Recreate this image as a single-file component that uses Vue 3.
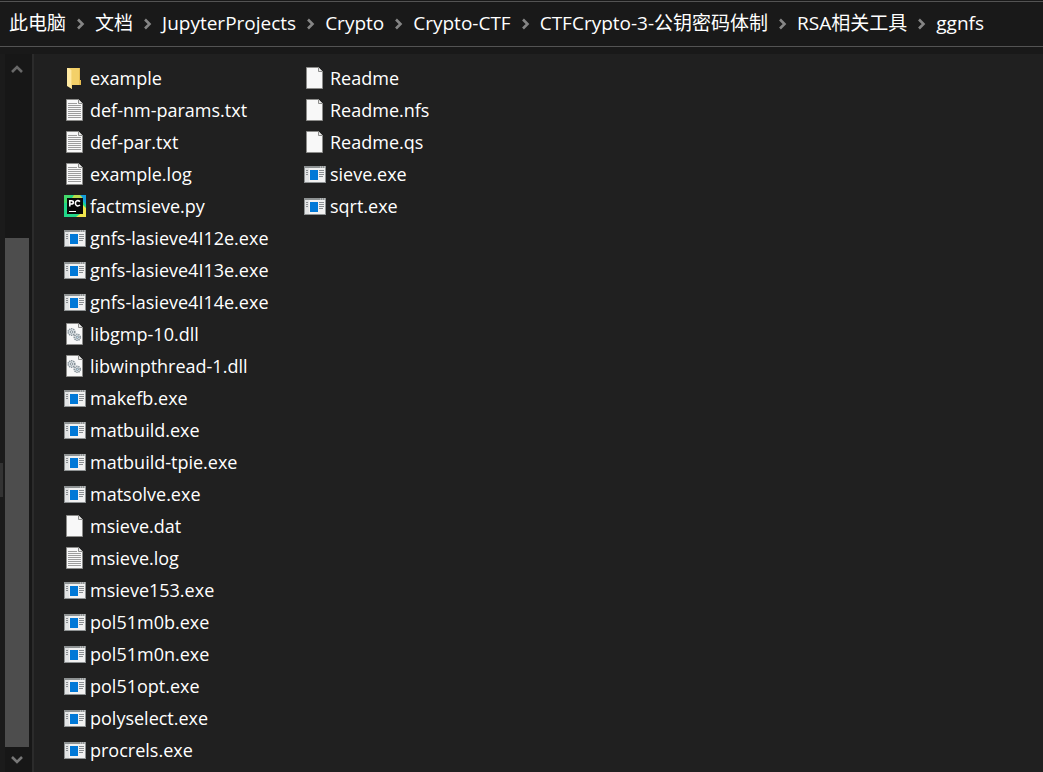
<script setup>
const crumbs = [
  '此电脑',
  '文档',
  'JupyterProjects',
  'Crypto',
  'Crypto-CTF',
  'CTFCrypto-3-公钥密码体制',
  'RSA相关工具',
  'ggnfs',
]

const files = [
  ['folder', 'example'],
  ['text', 'def-nm-params.txt'],
  ['text', 'def-par.txt'],
  ['text', 'example.log'],
  ['python', 'factmsieve.py'],
  ['exe', 'gnfs-lasieve4I12e.exe'],
  ['exe', 'gnfs-lasieve4I13e.exe'],
  ['exe', 'gnfs-lasieve4I14e.exe'],
  ['dll', 'libgmp-10.dll'],
  ['dll', 'libwinpthread-1.dll'],
  ['exe', 'makefb.exe'],
  ['exe', 'matbuild.exe'],
  ['exe', 'matbuild-tpie.exe'],
  ['exe', 'matsolve.exe'],
  ['blank', 'msieve.dat'],
  ['text', 'msieve.log'],
  ['exe', 'msieve153.exe'],
  ['exe', 'pol51m0b.exe'],
  ['exe', 'pol51m0n.exe'],
  ['exe', 'pol51opt.exe'],
  ['exe', 'polyselect.exe'],
  ['exe', 'procrels.exe'],
  ['blank', 'Readme'],
  ['blank', 'Readme.nfs'],
  ['blank', 'Readme.qs'],
  ['exe', 'sieve.exe'],
  ['exe', 'sqrt.exe'],
].map(([type, name]) => ({ type, name }))
</script>

<template>
  <div class="explorer">
    <nav class="address" aria-label="Path">
      <template v-for="(crumb, i) in crumbs" :key="crumb">
        <svg v-if="i" class="separator" viewBox="0 0 9 12" aria-hidden="true">
          <path d="M2 1.5 L6.5 6 L2 10.5" fill="none" stroke="#858585" stroke-width="2.6" />
        </svg>
        <a class="crumb" href="#">{{ crumb }}</a>
      </template>
    </nav>

    <div class="body">
      <div class="side">
        <div class="edge"><span class="edge-thumb"></span></div>
        <div class="scrollbar">
          <button class="arrow" type="button" aria-label="Scroll up">
            <svg viewBox="0 0 12 10" aria-hidden="true">
              <path d="M1 8 L6 3 L11 8" fill="none" stroke="#686868" stroke-width="2.6" />
            </svg>
          </button>
          <div class="track"><div class="thumb"></div></div>
          <button class="arrow" type="button" aria-label="Scroll down">
            <svg viewBox="0 0 12 10" aria-hidden="true">
              <path d="M1 2 L6 7 L11 2" fill="none" stroke="#777777" stroke-width="2.6" />
            </svg>
          </button>
        </div>
      </div>

      <main class="content">
        <ul class="files">
          <li v-for="file in files" :key="file.name">
            <a class="file" href="#">
              <svg class="icon" viewBox="0 0 22 22" aria-hidden="true">
                <g v-if="file.type === 'folder'">
                  <path d="M5 1H16V13H17V18H5Z" fill="#f3d068" />
                  <path d="M15 1H16V13H17V18H15Z" fill="#e5bb50" />
                  <path d="M3 1H5L8 4V22L3 19Z" fill="#ffe9a2" />
                  <path d="M7 3H8V22L7 21Z" fill="#f7d980" />
                </g>
                <g v-else-if="file.type === 'python'">
                  <rect width="22" height="22" fill="#21d789" />
                  <path d="M12 0H22V10L18 5Z" fill="#14a9df" />
                  <path d="M10 0H16L19 3H8Z" fill="#b9dc4c" />
                  <path d="M17 0H22V9Z" fill="#159edb" />
                  <path d="M19 10L22 13V22H12L16 19H19Z" fill="#f0e44c" />
                  <path d="M0 0H7L3 8H0Z" fill="#42d96a" />
                  <rect x="3" y="3" width="16" height="16" fill="#080808" />
                  <path d="M5.8 11.5V5.8H7.3C10 5.8 10 9 7.3 9H5.8M16 6.6C14 4.9 11.4 5.6 11.4 8.3S14 11.7 16 10" fill="none" stroke="#ffffff" stroke-width="1.6" />
                  <rect x="5" y="16" width="7" height="1" fill="#ffffff" />
                </g>
                <g v-else-if="file.type === 'exe'">
                  <rect x="0" y="3" width="22" height="17" fill="#8e9293" />
                  <rect x="1" y="5" width="20" height="14" fill="#f1f1f1" />
                  <rect x="1" y="5" width="4" height="14" fill="#e2e4e5" />
                  <path d="M16 4H17M18 4H19M20 4H21" stroke="#dddddd" />
                  <rect x="6" y="7" width="8" height="10" fill="#0078d7" />
                  <path d="M2 7.5H4M2 9.5H4M2 11.5H4M15 7.5H20M15 9.5H20M15 11.5H20M15 13.5H19" stroke="#8a8e91" />
                </g>
                <g v-else>
                  <path d="M2.5 .5H14.5L18.5 4.5V21.5H2.5Z" fill="#f8f8f8" stroke="#8c8c8a" />
                  <path d="M14.5 .5V4.5H18.5" fill="#e8e8e8" stroke="#8c8c8a" />
                  <path v-if="file.type === 'text'" d="M4 4.5H13M4 6.5H17M4 8.5H17M4 10.5H17M4 12.5H17M4 14.5H17M4 16.5H17M4 18.5H17" stroke="#9c9c9c" />
                  <g v-if="file.type === 'dll'" fill="#e5ebee" stroke="#88939a">
                    <circle cx="7.5" cy="9" r="3.3" stroke-width="1.6" stroke-dasharray="1.4 .7" />
                    <circle cx="7.5" cy="9" r="1.3" />
                    <circle cx="13.3" cy="14.3" r="3" stroke-width="1.6" stroke-dasharray="1.4 .7" />
                    <circle cx="13.3" cy="14.3" r="1.2" fill="#c5e2f2" />
                  </g>
                </g>
              </svg>
              <span>{{ file.name }}</span>
            </a>
          </li>
        </ul>
      </main>
    </div>
  </div>
</template>

<style>
body {
  margin: 0;
  background: #202020;
}
</style>

<style scoped>
.explorer {
  display: flex;
  flex-direction: column;
  min-height: 100vh;
  box-sizing: border-box;
  padding-top: 1px;
  background: #191919;
  color: #ffffff;
  font: 18px/24px "Open Sans", "Noto Sans CJK SC", sans-serif;
}
.address {
  display: flex;
  align-items: center;
  gap: 10px;
  height: 44px;
  padding: 0 9px;
  border-top: 1px solid #535353;
  border-bottom: 1px solid #535353;
  font-size: 19px;
  white-space: nowrap;
}
a {
  color: inherit;
  text-decoration: none;
}
.crumb {
  padding-bottom: 2px;
}
.separator {
  flex: none;
  width: 9px;
  height: 12px;
}
.body {
  display: flex;
  flex: 1;
  margin-top: 7px;
}
.side {
  display: flex;
  border-right: 2px solid #2b2b2b;
  padding-right: 3px;
  background: #171717;
}
.edge {
  display: flex;
  flex-direction: column;
  width: 5px;
  padding-top: 409px;
  box-sizing: border-box;
  background: #1b1b1b;
}
.edge-thumb {
  width: 3px;
  height: 34px;
  background: #333333;
}
.scrollbar {
  display: flex;
  flex-direction: column;
  width: 24px;
}
.arrow {
  display: grid;
  place-items: center;
  height: 25px;
  padding: 0;
  border: 0;
  background: transparent;
}
.arrow:first-child {
  height: 29px;
}
.arrow svg {
  width: 12px;
  height: 10px;
}
.track {
  display: grid;
  flex: 1;
  grid-template-rows: 155fr 509fr;
}
.thumb {
  grid-row: 2;
  background: #4d4d4d;
}
.content {
  flex: 1;
  background: #202020;
}
.files {
  display: grid;
  grid-template-rows: repeat(22, 32px);
  grid-auto-flow: column;
  grid-auto-columns: 240px;
  margin: 0;
  padding: 8px 0 0 30px;
  list-style: none;
}
.file {
  display: flex;
  align-items: center;
  gap: 4px;
  height: 32px;
  white-space: nowrap;
}
.icon {
  flex: none;
  width: 22px;
  height: 22px;
}
</style>
